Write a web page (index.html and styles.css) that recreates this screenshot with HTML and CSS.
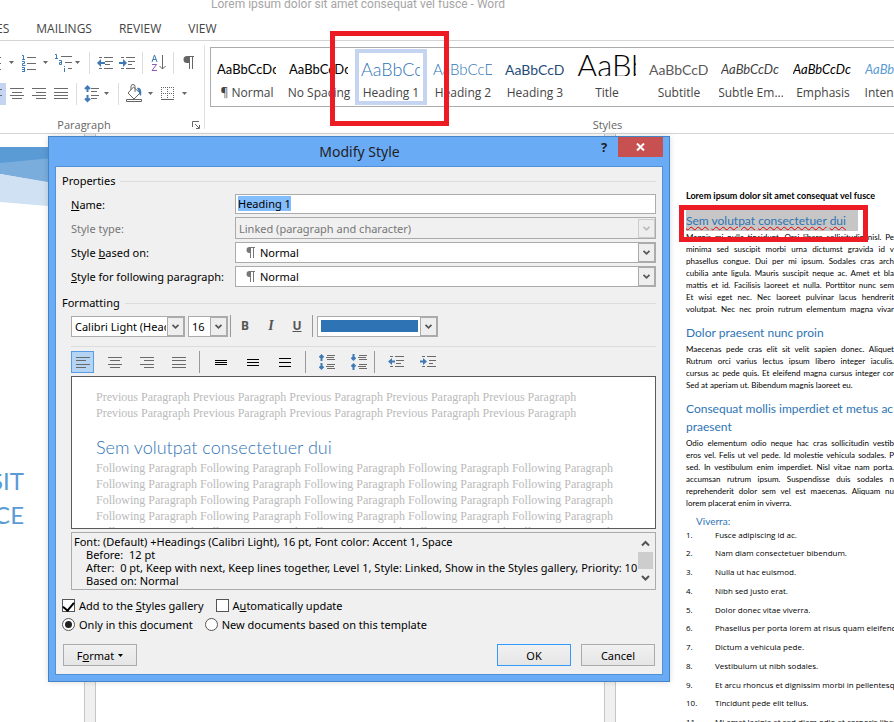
FILE: index.html
```
<!DOCTYPE html>
<html lang="en">
<head>
  <meta charset="UTF-8">
  <meta name="viewport" content="width=device-width, initial-scale=1.0">
  <title>Lorem ipsum dolor sit amet consequat vel fusce - Word</title>
  <link rel="stylesheet" href="styles.css">
</head>
<body>
  <!-- window title and tabs -->
  <header class="title-bar">Lorem ipsum dolor sit amet consequat vel fusce - Word</header>
  <nav class="tabs">
    <a href="#">ES</a>
    <a href="#">MAILINGS</a>
    <a href="#">REVIEW</a>
    <a href="#">VIEW</a>
  </nav>

  <!-- ribbon -->
  <div class="ribbon">
    <section class="group paragraph-group">
      <div class="tool-row">
        <button aria-label="Bullets"><svg width="18" height="22"><path class="ln" d="M0 5.500h1M0 11.500h1M0 17.500h1"/><path class="dd" d="M9 9h5l-2.500 3z"/></svg></button>
        <button aria-label="Numbering"><svg width="34" height="22"><path class="ln" d="M9 5.500h9M9 11.500h9M9 17.500h9"/><path class="bl" d="M4 3.500h1.500v4M4 7.500h3M4 9.500h2.500v2h-2v2h3M4 15.500h2.500v4M4 17.500h2.500M4 19.500h3"/><path class="dd" d="M25 9h5l-2.500 3z"/></svg></button>
        <button aria-label="Multilevel list"><svg width="34" height="22"><path class="ln" d="M9 4.500h11M13 10.500h7M16 16.500h4"/><path class="bl" d="M3 2.500h1.500v4M3 6.500h3M7 8.500h2.500v4h-2v-2h2M12.500 14v1M12.500 16v4"/><path class="dd" d="M23 9h5l-2.500 3z"/></svg></button>
        <i class="sep"></i>
        <button aria-label="Decrease indent"><svg width="23" height="22"><path class="ln" d="M6 5.500h3M11 5.500h9M12 9.500h8M12 12.500h5M6 16.500h3M11 16.500h9"/><path class="bf" d="M4 11l4-4v3h4v2H8v3z"/></svg></button>
        <button aria-label="Increase indent"><svg width="23" height="22"><path class="ln" d="M5 5.500h3M10 5.500h9M12 9.500h7M12 12.500h4M5 16.500h3M10 16.500h9"/><path class="bf" d="M11 11L7 7v3H3v2h4v3z"/></svg></button>
        <i class="sep"></i>
        <button aria-label="Sort"><svg width="24" height="22"><path class="bl" d="M6 10l2.500-7 2.500 7M7 7.500h3"/><path class="pu" d="M6 12.500h4.500L6 18.500h5"/><path class="dk" d="M16.500 3v14M13.500 14l3 3 3-3"/></svg></button>
        <i class="sep"></i>
        <button aria-label="Show marks"><svg width="23" height="22"><path class="gf" d="M10 4h7v1h-1v12h-1V5h-2v12h-1v-6h-2a3.500 3.500 0 0 1 0-7z"/></svg></button>
      </div>
      <div class="tool-row">
        <button class="on" aria-label="Align left"><svg width="6" height="22"><path class="ln" d="M0 6.500h2M0 12.500h2"/></svg></button>
        <button aria-label="Center"><svg width="22" height="22"><path class="ln" d="M4 5.500h14M6 9.500h10M4 12.500h14M6 15.500h10"/></svg></button>
        <button aria-label="Align right"><svg width="22" height="22"><path class="ln" d="M4 5.500h14M8 9.500h10M4 12.500h14M8 15.500h10"/></svg></button>
        <button aria-label="Justify"><svg width="23" height="22"><path class="ln" d="M4 5.500h14M4 9.500h14M4 12.500h14M4 15.500h14"/></svg></button>
        <i class="sep"></i>
        <button aria-label="Line spacing"><svg width="35" height="22"><path class="ln" d="M11 5.500h8M11 8.500h6M11 12.500h8M11 15.500h6"/><path class="bl2" d="M7.500 4v5M7.500 12v6M5 6l2.500-2.500L10 6M5 15.500l2.500 2.500 2.500-2.500"/><path class="dd" d="M24 9h5l-2.500 3z"/></svg></button>
        <i class="sep"></i>
        <button aria-label="Shading"><svg width="34" height="22"><path class="dk" d="M6 10l5.500-6L18 10l-6 6zM9 7V3.500a2 2 0 0 1 4 0V9"/><path class="bf" d="M15 5c4-1 5 3 4 8-2-1-2-3-2-4z"/><path class="dk" d="M4.500 16.500h15v2h-15z"/><path class="dd" d="M26 9h5l-2.500 3z"/></svg></button>
        <button aria-label="Borders"><svg width="34" height="22"><path class="dots" d="M5 4.500h13M5 10.500h13M5.500 4v12M11.500 4v12M17.500 4v12"/><path class="dk" d="M5 16.500h13"/><path class="dd" d="M26 9h5l-2.500 3z"/></svg></button>
      </div>
      <div class="group-label">Paragraph
        <svg class="launcher" width="8" height="8"><path class="dk" d="M.5 6V.5H7M3 3l4 4M7.500 4v3.500H4"/></svg>
      </div>
    </section>
    <section class="group styles-group">
      <div class="gallery">
        <button class="style"><span class="sample">AaBbCcDc</span><span class="style-name">¶ Normal</span></button>
        <button class="style"><span class="sample">AaBbCcDc</span><span class="style-name">No Spacing</span></button>
        <button class="style current"><span class="sample h1">AaBbCc</span><span class="style-name">Heading 1</span></button>
        <button class="style"><span class="sample h2">AaBbCcD</span><span class="style-name">Heading 2</span></button>
        <button class="style"><span class="sample h3">AaBbCcD</span><span class="style-name">Heading 3</span></button>
        <button class="style"><span class="sample title">AaBb</span><span class="style-name">Title</span></button>
        <button class="style"><span class="sample subtitle">AaBbCcD</span><span class="style-name">Subtitle</span></button>
        <button class="style"><span class="sample subtle">AaBbCcDc</span><span class="style-name">Subtle Em...</span></button>
        <button class="style"><span class="sample emphasis">AaBbCcDc</span><span class="style-name">Emphasis</span></button>
        <button class="style"><span class="sample intense">AaBbCcDc</span><span class="style-name">Intense E...</span></button>
      </div>
      <div class="group-label">Styles</div>
    </section>
  </div>

  <!-- document pages -->
  <main class="workspace">
    <div class="page cover">
      <svg class="cover-art" viewBox="0 0 84 64" width="84" height="64">
        <path fill="#5b9bd5" d="M0 0h84v11L0 17z"/>
        <path fill="#7aaddc" d="M0 16L84 8v34L0 27z"/>
        <path fill="#cfe1f2" d="M0 27l84 14v21L0 55z"/>
      </svg>
      <h1 class="cover-title">SIT<br>CE</h1>
    </div>
    <div class="gutter"></div>
    <div class="page"></div>
    <div class="gutter"></div>
    <div class="page text-page">
      <p class="lead">Lorem ipsum dolor sit amet consequat vel fusce</p>
      <h2 class="picked"><span><u>Sem</u> <u>volutpat</u> <u>consectetuer</u> <u>dui</u></span></h2>
      <p class="body">
        <span>Magnis mi nulla tincidunt. Orci libero sollicitudin nisl. Pe</span>
        <span>minima sed suscipit morbi urna dictumst gravida id v</span>
        <span>phasellus congue. Dui per mi ipsum. Sodales cras arch</span>
        <span>cubilia ante ligula. Mauris suscipit neque ac. Amet et bla</span>
        <span>mattis et id. Facilisis laoreet et nulla. Porttitor nunc sem</span>
        <span>Et wisi eget nec. Nec laoreet pulvinar lacus hendrerit</span>
        <span>volutpat. Nec nec proin rutrum elementum magna vivar</span>
      </p>
      <h2>Dolor praesent nunc proin</h2>
      <p class="body">
        <span>Maecenas pede cras elit sit velit sapien donec. Aliquet</span>
        <span>Rutrum orci varius lectus ipsum libero integer iaculis.</span>
        <span>cursus ac pede quis. Et eleifend magna cursus integer cor</span>
        <span class="last">Sed at aperiam ut. Bibendum magnis laoreet eu.</span>
      </p>
      <h2>Consequat mollis imperdiet et metus ac<br>praesent</h2>
      <p class="body">
        <span>Odio elementum odio neque hac cras sollicitudin vestib</span>
        <span>eros vel. Felis ut vel pede. Id molestie vehicula sodales. P</span>
        <span>sed. In vestibulum enim imperdiet. Nisl vitae nam porta.</span>
        <span>accumsan rutrum ipsum. Suspendisse duis sodales n</span>
        <span>reprehenderit dolor sem vel est maecenas. Aliquam nu</span>
        <span class="last">lorem placerat enim in viverra.</span>
      </p>
      <h3>Viverra:</h3>
      <ol>
        <li>Fusce adipiscing id ac.</li>
        <li>Nam diam consectetuer bibendum.</li>
        <li>Nulla ut hac euismod.</li>
        <li>Nibh sed justo erat.</li>
        <li>Dolor donec vitae viverra.</li>
        <li>Phasellus per porta lorem at risus quam eleifend</li>
        <li>Dictum a vehicula pede.</li>
        <li>Vestibulum ut nibh sodales.</li>
        <li>Et arcu rhoncus et dignissim morbi in pellentesque</li>
        <li>Tincidunt pede elit tellus.</li>
        <li>Mi amet lacinia et sed diam odio et corporis libero</li>
      </ol>
    </div>
  </main>

  <!-- modify style dialog -->
  <div class="dialog" role="dialog" aria-labelledby="dialog-title">
    <div class="dialog-bar">
      <h2 id="dialog-title">Modify Style</h2>
      <button class="help" aria-label="Help">?</button>
      <button class="close" aria-label="Close"><svg width="9" height="8"><path d="M1 .5l7 7M8 .5l-7 7"/></svg></button>
    </div>
    <form class="dialog-body">
      <div class="legend">Properties</div>
      <div class="fields">
        <label for="name"><u>N</u>ame:</label>
        <input type="text" id="name" value="Heading 1">
        <label for="type" class="off">Style type:</label>
        <div class="combo disabled">
          <select id="type" disabled><option>Linked (paragraph and character)</option></select>
          <svg class="arrow" width="17" height="100%" viewBox="0 0 17 20"><path d="M5 8l3.500 3.500L12 8"/></svg>
        </div>
        <label for="based">Style <u>b</u>ased on:</label>
        <div class="combo marked">
          <select id="based"><option>Normal</option></select>
          <svg class="mark" width="9" height="11"><path d="M3.500 0H9v1H8v10H7V1H5v10H4V6h-.5a3 3 0 0 1 0-6z"/></svg>
          <svg class="arrow" width="17" height="100%" viewBox="0 0 17 20"><path d="M5 8l3.500 3.500L12 8"/></svg>
        </div>
        <label for="following"><u>S</u>tyle for following paragraph:</label>
        <div class="combo marked">
          <select id="following"><option>Normal</option></select>
          <svg class="mark" width="9" height="11"><path d="M3.500 0H9v1H8v10H7V1H5v10H4V6h-.5a3 3 0 0 1 0-6z"/></svg>
          <svg class="arrow" width="17" height="100%" viewBox="0 0 17 20"><path d="M5 8l3.500 3.500L12 8"/></svg>
        </div>
      </div>

      <div class="legend">Formatting</div>
      <div class="format-area">
        <div class="format-row">
          <div class="combo font-combo">
            <select aria-label="Font"><option>Calibri Light (Headings)</option></select>
            <svg class="arrow" width="17" height="100%" viewBox="0 0 17 20"><path d="M5 8l3.500 3.500L12 8"/></svg>
          </div>
          <div class="combo size-combo">
            <select aria-label="Font size"><option>16</option></select>
            <svg class="arrow" width="17" height="100%" viewBox="0 0 17 20"><path d="M5 8l3.500 3.500L12 8"/></svg>
          </div>
          <i class="bar"></i>
          <button type="button" class="letter bold">B</button>
          <button type="button" class="letter italic">I</button>
          <button type="button" class="letter underline">U</button>
          <i class="bar"></i>
          <div class="combo color-combo">
            <select aria-label="Font color"><option></option></select>
            <span class="swatch"></span>
            <svg class="arrow" width="17" height="100%" viewBox="0 0 17 20"><path d="M5 8l3.500 3.500L12 8"/></svg>
          </div>
        </div>
        <div class="align-row">
          <button type="button" class="on" aria-label="Align left"><svg width="14" height="11"><path class="ln" d="M0 .5h14M0 3.500h10M0 7.500h14M0 10.500h10"/></svg></button>
          <button type="button" aria-label="Center"><svg width="14" height="11"><path class="ln" d="M0 .5h14M2 3.500h10M0 7.500h14M2 10.500h10"/></svg></button>
          <button type="button" aria-label="Align right"><svg width="14" height="11"><path class="ln" d="M0 .5h14M4 3.500h10M0 7.500h14M4 10.500h10"/></svg></button>
          <button type="button" aria-label="Justify"><svg width="14" height="11"><path class="ln" d="M0 .5h14M0 3.500h14M0 7.500h14M0 10.500h14"/></svg></button>
          <i class="bar"></i>
          <button type="button" aria-label="Single spacing"><svg width="12" height="9"><path class="bk" d="M0 2.500h12M0 4.500h12M0 6.500h12"/></svg></button>
          <button type="button" aria-label="1.5 spacing"><svg width="12" height="9"><path class="bk" d="M0 1.500h12M0 4.500h12M0 7.500h12"/></svg></button>
          <button type="button" aria-label="Double spacing"><svg width="12" height="9"><path class="bk" d="M0 .5h12M0 4.500h12M0 8.500h12"/></svg></button>
          <i class="bar"></i>
          <button type="button" aria-label="Increase paragraph spacing"><svg width="16" height="16"><path class="ln" d="M8 1.500h8M7 3.500h8M8 5.500h8M8 10.500h8M7 12.500h8M8 14.500h8"/><path class="bl2" d="M2.500 1v6M.5 3.500l2-2 2 2M2.500 9v6M.5 12.500l2 2 2-2"/></svg></button>
          <button type="button" aria-label="Decrease paragraph spacing"><svg width="16" height="16"><path class="ln" d="M8 1.500h8M7 3.500h8M8 5.500h8M8 10.500h8M7 12.500h8M8 14.500h8"/><path class="bl2" d="M2.500 0v6M.5 3.500l2 2 2-2M2.500 10v6M.5 12.500l2-2 2 2"/></svg></button>
          <i class="bar tight"></i>
          <button type="button" aria-label="Decrease indent"><svg width="16" height="12"><path class="ln" d="M2 .5h3M7 .5h9M8 4.500h8M8 7.500h5M2 10.500h3M7 10.500h9"/><path class="bf" d="M0 5.500L4 2v2.500h3v2H4V9z"/></svg></button>
          <button type="button" aria-label="Increase indent"><svg width="16" height="12"><path class="ln" d="M2 .5h3M7 .5h9M9 4.500h7M9 7.500h4M2 10.500h3M7 10.500h9"/><path class="bf" d="M7 5.500L3 2v2.500H0v2h3V9z"/></svg></button>
        </div>
        <div class="preview">
          <p>Previous Paragraph Previous Paragraph Previous Paragraph Previous Paragraph Previous Paragraph<br>Previous Paragraph Previous Paragraph Previous Paragraph Previous Paragraph Previous Paragraph</p>
          <h3>Sem volutpat consectetuer dui</h3>
          <p>Following Paragraph Following Paragraph Following Paragraph Following Paragraph Following Paragraph<br>Following Paragraph Following Paragraph Following Paragraph Following Paragraph Following Paragraph<br>Following Paragraph Following Paragraph Following Paragraph Following Paragraph Following Paragraph<br>Following Paragraph Following Paragraph Following Paragraph Following Paragraph Following Paragraph<br>Following Paragraph Following Paragraph Following Paragraph Following Paragraph Following Paragraph</p>
        </div>
        <div class="description">
          <div class="description-text">
            <p>Font: (Default) +Headings (Calibri Light), 16 pt, Font color: Accent 1, Space</p>
            <p class="indent">Before:  12 pt</p>
            <p class="indent">After:  0 pt, Keep with next, Keep lines together, Level 1, Style: Linked, Show in the Styles gallery, Priority: 10</p>
            <p class="indent">Based on: Normal</p>
          </div>
          <div class="scrollbar">
            <svg width="15" height="17"><path d="M4 10.500L7.500 7l3.500 3.500"/></svg>
            <span class="thumb"></span>
            <svg width="15" height="17"><path d="M4 7l3.500 3.500L11 7"/></svg>
          </div>
        </div>
      </div>

      <div class="choices">
        <label><input type="checkbox" checked><span>Add to the <u>S</u>tyles gallery</span></label>
        <label><input type="checkbox"><span>A<u>u</u>tomatically update</span></label>
      </div>
      <div class="choices">
        <label><input type="radio" name="scope" checked><span>Only in this <u>d</u>ocument</span></label>
        <label><input type="radio" name="scope"><span>New documents based on this template</span></label>
      </div>
      <div class="actions">
        <button type="button" class="btn format"><span>F<u>o</u>rmat</span><svg width="5" height="3"><path d="M0 0h5L2.500 3z"/></svg></button>
        <button type="button" class="btn ok">OK</button>
        <button type="button" class="btn">Cancel</button>
      </div>
    </form>
  </div>

  <!-- callouts -->
  <div class="callout callout-gallery"></div>
  <div class="callout callout-heading"></div>

  <script>
    const nameInput = document.getElementById('name');
    nameInput.focus();
    nameInput.select();
  </script>
</body>
</html>
```
FILE: styles.css
```
* {
  box-sizing: border-box;
}

body {
  margin: 0;
  height: 100vh;
  overflow: hidden;
  position: relative;
  display: flex;
  flex-direction: column;
  background: #fff;
  font-family: "Open Sans", "Noto Sans", sans-serif;
  font-size: 12px;
  color: #444;
}

h1, h2, h3, p, ol {
  margin: 0;
  padding: 0;
  font-weight: 400;
}

button {
  padding: 0;
  border: none;
  background: none;
  font: inherit;
  color: inherit;
}

svg {
  display: block;
  fill: none;
}

/* icon strokes */
.ln { stroke: #6a6a6a; }
.dk { stroke: #666; }
.bk { stroke: #000; }
.bl { stroke: #3f7ab5; }
.bl2 { stroke: #3f7ab5; stroke-width: 2; }
.pu { stroke: #8d5bb0; }
.dots { stroke: #666; stroke-dasharray: 1 1; }
.dd { fill: #666; }
.bf { fill: #3f7ab5; }
.gf { fill: #666; }

/* title and tabs */
.title-bar {
  height: 14px;
  line-height: 8px;
  padding-left: 211px;
  font-family: Roboto, sans-serif;
  font-size: 12px;
  color: #a6a6a6;
  white-space: nowrap;
}

.tabs {
  display: flex;
  gap: 27px;
  height: 27px;
  line-height: 30px;
  border-bottom: 1px solid #d4d4d4;
}

.tabs a {
  color: #444;
  text-decoration: none;
}

.tabs a:first-child {
  margin-left: -4px;
}

/* ribbon */
.ribbon {
  display: flex;
  height: 93px;
  padding-top: 4px;
  border-bottom: 1px solid #d4d4d4;
}

.group {
  display: flex;
  flex-direction: column;
}

.paragraph-group {
  width: 205px;
  height: 84px;
  padding-top: 7px;
  border-right: 1px solid #e1e1e1;
  gap: 9px;
}

.tool-row {
  display: flex;
  align-items: center;
  height: 22px;
}

.tool-row .on {
  background: #c5d5f1;
}

.sep {
  width: 1px;
  height: 22px;
  margin: 0 3px;
  background: #dcdcdc;
}

.group-label {
  position: relative;
  line-height: 16px;
  font-size: 11px;
  color: #666;
  text-align: center;
}

.paragraph-group .group-label {
  padding-right: 36px;
  margin-top: 3px;
}

.launcher {
  position: absolute;
  right: 4px;
  top: 4px;
}

.styles-group {
  flex: 1;
  padding: 2px 0 0 5px;
  overflow: hidden;
}

.styles-group .group-label {
  margin-top: 10px;
  padding-left: 111px;
}

.gallery {
  display: flex;
  height: 60px;
  border: 1px solid #ababab;
  border-right: none;
  overflow: hidden;
}

.style {
  display: flex;
  flex: 0 0 72px;
  flex-direction: column;
  height: 56px;
  margin-top: 1px;
  padding: 2px 2px 0;
  border: 4px solid transparent;
  overflow: hidden;
}

.style.current {
  border-color: #c5d5f1;
}

.sample {
  flex: none;
  height: 21px;
  width: 59px;
  line-height: 29px;
  overflow: hidden;
  white-space: nowrap;
  text-align: left;
  font-family: Lato, sans-serif;
  font-size: 13px;
  color: #000;
}

.h1 {
  font-size: 18px;
  font-weight: 300;
  line-height: 28px;
  color: #2e74b5;
}

.h2 {
  font-size: 15px;
  font-weight: 300;
  color: #2e74b5;
}

.h3 {
  font-size: 14px;
  color: #1f4d78;
}

.title {
  font-size: 31px;
  font-weight: 300;
  line-height: 20px;
}

.subtitle {
  font-size: 14px;
  color: #5a5a5a;
}

.subtle,
.emphasis,
.intense {
  font-style: italic;
}

.subtle {
  color: #404040;
}

.intense {
  color: #5b9bd5;
}

.style-name {
  align-self: center;
  flex: none;
  margin-top: 9px;
  line-height: 16px;
  white-space: nowrap;
}

/* pages */
.workspace {
  flex: 1;
  min-height: 0;
  display: grid;
  grid-template-columns: 84px 12px 508px 12px 1fr;
  overflow: hidden;
}

.gutter {
  background: #f0f0f0;
  border: solid #c6c6c6;
  border-width: 0 1px;
}

.cover {
  padding-top: 13px;
}

.cover-title {
  width: 24px;
  margin-top: 253px;
  display: flex;
  justify-content: flex-end;
  text-align: right;
  font: 24px/34px Lato, sans-serif;
  color: #5b9bd5;
}

.text-page {
  padding: 56px 0 0 70px;
  font: 8px/12px Lato, sans-serif;
  color: #000;
  overflow: hidden;
}

.lead {
  font-size: 9px;
  font-weight: 700;
}

.text-page h2 {
  margin: 9px 0 1px;
  font-size: 12px;
  line-height: 18px;
  color: #2e74b5;
  white-space: nowrap;
}

.text-page .picked {
  margin: 8px 0 0;
  line-height: 21px;
}

.picked span {
  display: inline-block;
  padding-right: 12px;
  background: #c6c6c6;
}

.picked u {
  text-decoration: underline wavy #e00000 1px;
}

.body span {
  display: block;
  white-space: nowrap;
  text-align: justify;
  text-align-last: justify;
}

.body .last {
  text-align-last: left;
}

.text-page h3 {
  margin-top: 4px;
  padding-left: 10px;
  font-size: 10px;
  line-height: 16px;
  color: #2e74b5;
}

.text-page ol {
  list-style: none;
  counter-reset: item;
  font-family: "Open Sans", sans-serif;
}

.text-page li {
  display: flex;
  padding-bottom: 7px;
  white-space: nowrap;
  counter-increment: item;
}

.text-page li:nth-child(4n+1) {
  padding-bottom: 6px;
}

.text-page li::before {
  content: counter(item) ".";
  flex: 0 0 29px;
}

/* dialog */
.dialog {
  position: absolute;
  left: 48px;
  top: 136px;
  width: 622px;
  padding: 0 6px 6px;
  border: 1px solid #4683c5;
  background: #6aabf6;
  box-shadow: 0 0 6px rgba(0, 0, 0, 0.15);
  font-family: "Noto Sans", sans-serif;
  font-size: 11px;
  color: #000;
}

.dialog-bar {
  display: flex;
  height: 29px;
  align-items: flex-start;
}

.dialog-bar h2 {
  flex: 1;
  padding-left: 74px;
  line-height: 30px;
  font-size: 14px;
  text-align: center;
  color: #222;
}

.help {
  width: 28px;
  line-height: 20px;
  font-size: 13px;
  font-weight: 700;
  color: #222;
}

.close {
  display: flex;
  align-items: center;
  justify-content: center;
  width: 45px;
  height: 20px;
  background: #c75050;
}

.close path {
  stroke: #fff;
  stroke-width: 2;
}

.dialog-body {
  padding: 6px;
  border: 1px solid #5090d8;
  background: #f0f0f0;
}

.legend {
  display: flex;
  align-items: center;
  gap: 5px;
  line-height: 16px;
}

.legend::after {
  content: "";
  flex: 1;
  height: 1px;
  background: #dcdcdc;
}

.fields {
  display: grid;
  grid-template-columns: 164px 1fr;
  row-gap: 3px;
  align-items: center;
  padding: 5px 0 8px 9px;
}

.off {
  color: #777;
}

input[type="text"] {
  width: 100%;
  height: 20px;
  padding: 0 2px 1px;
  border: 1px solid #ababab;
  background: #fff;
  font: inherit;
  outline: none;
}

input::selection {
  background: #84bdfb;
  color: #000;
}

.combo {
  display: grid;
  align-items: center;
  height: 21px;
  border: 1px solid #ababab;
  background: #fff;
}

.combo > * {
  grid-area: 1 / 1;
}

.combo select {
  width: 100%;
  height: 19px;
  padding: 0 18px 0 3px;
  border: none;
  background: none;
  font: inherit;
  color: #000;
  opacity: 1;
  appearance: none;
}

.combo.disabled {
  height: 22px;
  background: #f0f0f0;
}

.combo.disabled select {
  color: #777;
}

.combo.marked select {
  padding-left: 24px;
}

.mark {
  margin-left: 10px;
  fill: #777;
  pointer-events: none;
}

.arrow {
  justify-self: end;
  height: 19px;
  border: 1px solid #ababab;
  background: #eee;
  pointer-events: none;
}

.arrow path {
  stroke: #555;
  stroke-width: 2;
}

.disabled .arrow {
  border-color: #ccc;
}

.disabled .arrow path {
  stroke: #bbb;
}

.format-area {
  padding: 0 0 6px 9px;
}

.format-row {
  display: flex;
  align-items: center;
  height: 36px;
  padding-bottom: 5px;
  border-bottom: 1px solid #dcdcdc;
}

.font-combo {
  width: 114px;
  margin-right: 3px;
}

.size-combo {
  width: 40px;
}

.color-combo {
  width: 121px;
  margin-left: 3px;
}

.swatch {
  width: 97px;
  height: 12px;
  margin-left: 3px;
  background: #2e74b5;
  pointer-events: none;
}

.bar {
  width: 1px;
  height: 22px;
  margin: 0 1px 0 2px;
  background: #999;
}

.letter {
  width: 26px;
  line-height: 20px;
  font-size: 12px;
  font-weight: 700;
  color: #555;
}

.italic {
  font-family: "Liberation Serif", serif;
  font-size: 14px;
  font-style: italic;
}

.underline {
  text-decoration: underline;
}

.align-row {
  display: flex;
  gap: 9px;
  padding: 4px 0 3px;
}

.align-row button {
  display: flex;
  align-items: center;
  justify-content: center;
  width: 23px;
  height: 22px;
}

.align-row .on {
  border: 1px solid #569de5;
  background: #b5d3f3;
}

.align-row .bar {
  margin: 0;
}

.align-row .tight {
  margin-left: -5px;
}

.preview {
  height: 153px;
  padding: 12px 24px 0;
  border: 1px solid #5a5a5a;
  background: #fff;
  overflow: hidden;
  font: 12px/16px "Liberation Serif", serif;
  color: #bababa;
  white-space: nowrap;
}

.preview h3 {
  margin: 14px 0 1px;
  font: 300 18px/24px Lato, sans-serif;
  color: #2e74b5;
}

.description {
  display: flex;
  height: 58px;
  margin-top: 3px;
  padding: 2px;
  border: 1px solid #ababab;
  overflow: hidden;
}

.description-text {
  flex: 1;
  min-width: 0;
  overflow: hidden;
  line-height: 13px;
}

.description-text p {
  white-space: pre;
}

.indent {
  padding-left: 12px;
}

.scrollbar {
  width: 15px;
}

.scrollbar path {
  stroke: #555;
  stroke-width: 2;
}

.thumb {
  display: block;
  height: 17px;
  background: #cdcdcd;
}

.choices {
  display: flex;
  gap: 12px;
  line-height: 19px;
}

.choices label {
  display: flex;
  align-items: center;
}

.choices input {
  display: grid;
  place-items: center;
  width: 13px;
  height: 13px;
  margin: 0 4px 0 0;
  border: 1px solid #555;
  background: #fff;
  appearance: none;
}

.choices input[type="radio"] {
  border-radius: 50%;
}

.choices input[type="radio"]:checked::before {
  content: "";
  width: 7px;
  height: 7px;
  border-radius: 50%;
  background: #222;
}

.choices input[type="checkbox"]:checked::before {
  content: "";
  width: 5px;
  height: 9px;
  margin-bottom: 3px;
  border: solid #000;
  border-width: 0 2px 2px 0;
  transform: rotate(40deg);
}

.actions {
  display: flex;
  gap: 10px;
  padding: 10px 1px 2px;
}

.btn {
  display: flex;
  align-items: center;
  justify-content: center;
  width: 74px;
  height: 22px;
  border: 1px solid #ababab;
  background: linear-gradient(#f1f1f1, #e5e5e5);
}

.btn.ok {
  border-color: #3399ff;
}

.format {
  margin-right: auto;
}

.format svg {
  margin-left: 4px;
  fill: #000;
}

/* callouts */
.callout {
  position: absolute;
  border: 5px solid #ed1c24;
  pointer-events: none;
}

.callout-gallery {
  left: 330px;
  top: 31px;
  width: 119px;
  height: 95px;
}

.callout-heading {
  left: 679px;
  top: 205px;
  width: 189px;
  height: 37px;
}
```
